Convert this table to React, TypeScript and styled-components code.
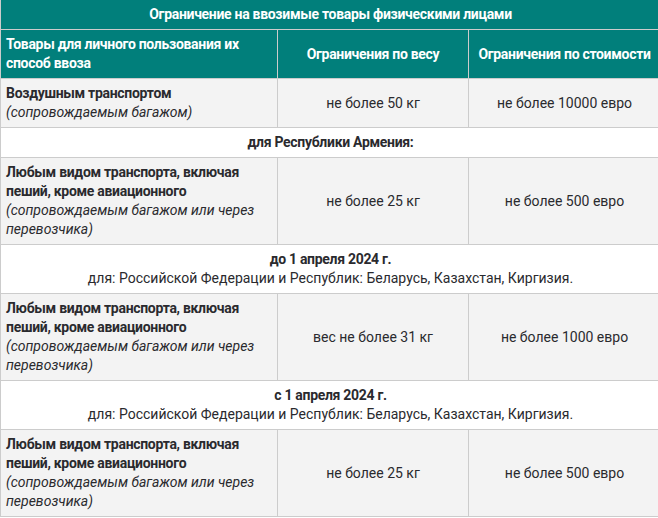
import styled, { createGlobalStyle } from 'styled-components';

const GlobalStyle = createGlobalStyle`
	html, body {
		margin: 0;
		padding: 0;
		overflow: hidden;
		background: #ffffff;
	}
	body {
		font-family: Roboto, 'Liberation Sans', sans-serif;
		font-size: 14px;
		line-height: 19px;
		color: #2a2a2e;
	}
`;

const Table = styled.table`
	width: 660px;
	table-layout: fixed;
	border-collapse: separate;
	border-spacing: 0;
	border-left: 1px solid #cccccc;
`;

const Col = styled.col<{ $w: number }>`
	width: ${(p) => p.$w}px;
`;

const Cell = styled.td<{ $center?: boolean; $shade?: boolean }>`
	padding: 5px 5px;
	border-right: 1px solid #cccccc;
	border-bottom: 1px solid #cccccc;
	background: ${(p) => (p.$shade ? '#f3f3f3' : '#ffffff')};
	text-align: ${(p) => (p.$center ? 'center' : 'left')};
	vertical-align: middle;
`;

const HeadCell = styled.th<{ $center?: boolean }>`
	padding: 5px 5px;
	border-right: 1px solid #cccccc;
	border-bottom: 1px solid #cccccc;
	background: #017f7b;
	color: #ffffff;
	font-weight: 700;
	letter-spacing: -0.3px;
	text-align: ${(p) => (p.$center ? 'center' : 'left')};
	vertical-align: middle;
`;

const Strong = styled.b`
	font-weight: 700;
	letter-spacing: -0.3px;
`;

const Note = styled.i`
	font-style: italic;
`;

type Item = {
	title: string;
	note: string;
	weight: string;
	cost: string;
};

type Group = {
	heading: string;
	sub?: string;
	items: Item[];
};

const anyTransport = 'Любым видом транспорта, включая пеший, кроме авиационного';
const carrierNote = '(сопровождаемым багажом или через перевозчика)';

const groups: Group[] = [
	{
		heading: 'для Республики Армения:',
		items: [
			{ title: anyTransport, note: carrierNote, weight: 'не более 25 кг', cost: 'не более 500 евро' },
		],
	},
	{
		heading: 'до 1 апреля 2024 г.',
		sub: 'для: Российской Федерации и Республик: Беларусь, Казахстан, Киргизия.',
		items: [
			{ title: anyTransport, note: carrierNote, weight: 'вес не более 31 кг', cost: 'не более 1000 евро' },
		],
	},
	{
		heading: 'с 1 апреля 2024 г.',
		sub: 'для: Российской Федерации и Республик: Беларусь, Казахстан, Киргизия.',
		items: [
			{ title: anyTransport, note: carrierNote, weight: 'не более 25 кг', cost: 'не более 500 евро' },
		],
	},
];

function ItemRow({ item }: { item: Item }) {
	return (
		<tr>
			<Cell $shade>
				<Strong>{item.title}</Strong>
				<br />
				<Note>{item.note}</Note>
			</Cell>
			<Cell $shade $center>
				{item.weight}
			</Cell>
			<Cell $shade $center>
				{item.cost}
			</Cell>
		</tr>
	);
}

export default function App() {
	return (
		<>
			<GlobalStyle />
			<Table>
				<colgroup>
					<Col $w={277} />
					<Col $w={191} />
					<Col $w={192} />
				</colgroup>
				<thead>
					<tr>
						<HeadCell colSpan={3} $center>
							Ограничение на ввозимые товары физическими лицами
						</HeadCell>
					</tr>
					<tr>
						<HeadCell>Товары для личного пользования их способ ввоза</HeadCell>
						<HeadCell $center>Ограничения по весу</HeadCell>
						<HeadCell $center>Ограничения по стоимости</HeadCell>
					</tr>
				</thead>
				<tbody>
					<ItemRow
						item={{
							title: 'Воздушным транспортом',
							note: '(сопровождаемым багажом)',
							weight: 'не более 50 кг',
							cost: 'не более 10000 евро',
						}}
					/>
					{groups.map((g) => (
						<>
							<tr key={g.heading}>
								<Cell colSpan={3} $center>
									<Strong>{g.heading}</Strong>
									{g.sub && (
										<>
											<br />
											{g.sub}
										</>
									)}
								</Cell>
							</tr>
							{g.items.map((it, i) => (
								<ItemRow key={g.heading + i} item={it} />
							))}
						</>
					))}
				</tbody>
			</Table>
		</>
	);
}
